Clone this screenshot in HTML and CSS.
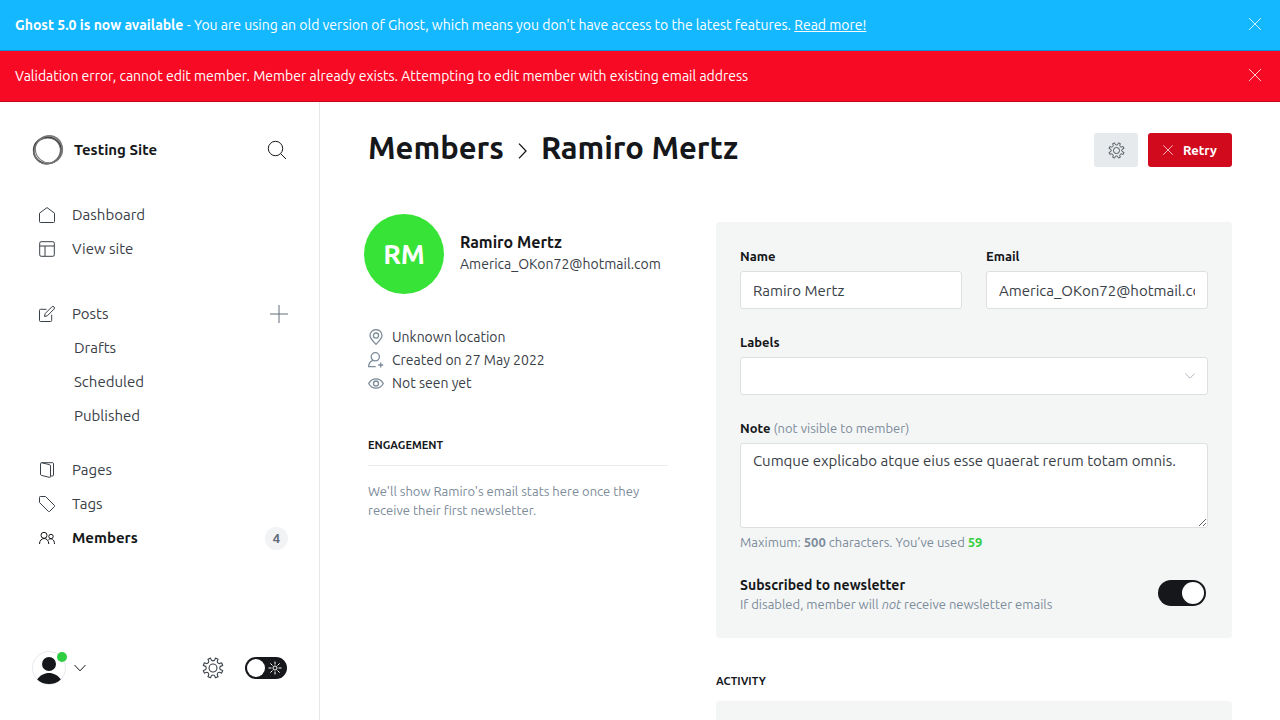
FILE: index.html
```html
<!DOCTYPE html>
<html lang="en">
<head>
<meta charset="utf-8">
<meta name="viewport" content="width=device-width, initial-scale=1">
<title>Ramiro Mertz - Members - Testing Site</title>
<link rel="stylesheet" href="styles.css">
</head>
<body>
<div class="app">
  <div class="alerts">
    <div class="alert alert-info" role="status">
      <p><strong>Ghost 5.0 is now available</strong> - You are using an old version of Ghost, which means you don't have access to the latest features. <a href="#">Read more!</a></p>
      <button class="alert-close" aria-label="Close"><svg viewBox="0 0 12 12" width="12" height="12"><path d="M0 0l12 12M12 0L0 12"/></svg></button>
    </div>
    <div class="alert alert-error" role="alert">
      <p>Validation error, cannot edit member. Member already exists. Attempting to edit member with existing email address</p>
      <button class="alert-close" aria-label="Close"><svg viewBox="0 0 12 12" width="12" height="12"><path d="M0 0l12 12M12 0L0 12"/></svg></button>
    </div>
  </div>

  <div class="shell">
    <aside class="sidebar">
      <header class="site">
        <svg class="site-logo" viewBox="0 0 32 32" width="32" height="32">
          <path d="M10 3.500C17-1 28 2 30 9.500c2 7-1 14-5 17.500 3-5 4.500-11 2-16C24 5 17 2.500 10 3.500z" fill="#bbb" stroke="none"/>
          <ellipse cx="15.400" cy="16.400" rx="13.800" ry="13.200" stroke="#333" stroke-width="1.500"/>
          <ellipse cx="15" cy="16.800" rx="13.600" ry="12.600" transform="rotate(-30 15 16.800)" stroke="#666" stroke-width="1"/>
          <ellipse cx="17" cy="15.400" rx="13.800" ry="13.400" transform="rotate(40 17 15.400)" stroke="#777" stroke-width="1"/>
          <ellipse cx="16.200" cy="16" rx="14.800" ry="13" transform="rotate(-55 16.200 16)" stroke="#777" stroke-width="1"/>
        </svg>
        <span class="site-name">Testing Site</span>
        <button class="icon-button" aria-label="Search"><svg viewBox="0 0 20 20" width="20" height="20"><circle cx="8.500" cy="8.500" r="7.200"/><path d="M13.700 13.700l5.300 5.300"/></svg></button>
      </header>

      <nav class="nav">
        <ul>
          <li><a href="#"><svg viewBox="0 0 16 16" width="16" height="16"><path d="M.5 6.200L8 .6l7.500 5.600v8.300a1 1 0 0 1-1 1h-13a1 1 0 0 1-1-1z"/></svg>Dashboard</a></li>
          <li><a href="#"><svg viewBox="0 0 16 16" width="16" height="16"><rect x=".7" y=".7" width="14.600" height="14.600" rx="1.500"/><path d="M.7 5h14.600M6 5v10.300"/></svg>View site</a></li>
        </ul>
        <ul class="posts">
          <li><a href="#"><svg viewBox="0 0 16 16" width="16" height="16"><path d="M7.500 3.300H1.500a1 1 0 0 0-1 1v10.200a1 1 0 0 0 1 1h10.200a1 1 0 0 0 1-1V8.700M5.500 10.500l.7-3L12.800.9a1.400 1.400 0 0 1 2.200 2.200L8.500 9.700z"/></svg>Posts</a>
            <button class="icon-button add" aria-label="New post"><svg viewBox="0 0 18 18" width="18" height="18"><path d="M9 0v18M0 9h18"/></svg></button></li>
          <li class="sub"><a href="#">Drafts</a></li>
          <li class="sub"><a href="#">Scheduled</a></li>
          <li class="sub"><a href="#">Published</a></li>
        </ul>
        <ul>
          <li><a href="#"><svg viewBox="0 0 16 16" width="16" height="16"><path d="M2.500.7h11a1 1 0 0 1 1 1V13a1 1 0 0 1-1 1h-1.700M2.500.7l7.800 1.900a1.500 1.500 0 0 1 1.200 1.400v10.300a1 1 0 0 1-1.300 1l-7.700-1.900a1.200 1.200 0 0 1-1-1.200V1.700a1 1 0 0 1 1-1z"/></svg>Pages</a></li>
          <li><a href="#"><svg viewBox="0 0 16 16" width="16" height="16"><path d="M1.300.5h5.200L15.500 9.500a.7.7 0 0 1 0 1l-5 5a.7.7 0 0 1-1 0L.5 6.500V1.300a.8.800 0 0 1 .8-.8z"/></svg>Tags</a></li>
          <li class="active"><a href="#" aria-current="page"><svg viewBox="0 0 16 16" width="16" height="16"><circle cx="5" cy="5.300" r="3"/><circle cx="12" cy="6.500" r="2.200"/><path d="M.5 14c0-7.300 9.300-7.300 9.300 0M9.500 9.600c2.600-1.800 6-.4 6 4.400"/></svg>Members</a><span class="count">4</span></li>
        </ul>
      </nav>

      <footer class="userbar">
        <button class="user" aria-label="User menu">
          <span class="user-photo">
            <svg viewBox="0 0 34 34" width="34" height="34"><circle cx="17" cy="17" r="16.500" fill="#fff" stroke="#e5e9ed"/><circle cx="17" cy="13" r="7" fill="#15171a" stroke="none"/><path d="M5.200 28.500c5.500-8.800 18.100-8.800 23.600 0-6.200 6-17.400 6-23.600 0z" fill="#15171a" stroke="none"/></svg>
            <span class="presence"></span>
          </span>
          <svg class="chevron" viewBox="0 0 12 8" width="12" height="8"><path d="M.5 1L6 6.800 11.500 1"/></svg>
        </button>
        <button class="icon-button settings" aria-label="Settings"><svg viewBox="0 0 24 24" width="22" height="22"><use href="#gear"/></svg></button>
        <label class="night">
          <input type="checkbox" aria-label="Night mode">
          <svg viewBox="0 0 14 14" width="14" height="14"><circle cx="7" cy="7" r="2"/><path d="M7 .5v3M7 10.500v3M.5 7h3M10.500 7h3M2.400 2.400l2.100 2.100M9.500 9.500l2.100 2.100M2.400 11.600l2.100-2.100M9.500 4.500l2.100-2.100"/></svg>
        </label>
      </footer>
    </aside>

    <main class="main">
      <header class="page-header">
        <h1><a href="#">Members</a><svg viewBox="0 0 9 16" width="9" height="16"><path d="M1 .6L8 8l-7 7.400" stroke-width="1.300"/></svg>Ramiro Mertz</h1>
        <div class="actions">
          <button class="btn btn-gray" aria-label="Member actions"><svg viewBox="0 0 24 24" width="17" height="17"><use href="#gear"/></svg></button>
          <button class="btn btn-red"><svg viewBox="0 0 10 10" width="10" height="10"><path d="M.3.3l9.400 9.400M9.700.3L.3 9.700" stroke-width=".7"/></svg>Retry</button>
        </div>
      </header>

      <div class="columns">
        <section class="profile">
          <div class="identity">
            <span class="initials">RM</span>
            <div class="identity-text">
              <h2>Ramiro Mertz</h2>
              <p>America_OKon72@hotmail.com</p>
            </div>
          </div>
          <ul class="facts">
            <li><svg viewBox="0 0 16 16" width="16" height="16"><path d="M8 15.400C6.300 13.300 2 10.200 2 6.600a6 6 0 0 1 12 0c0 3.600-4.300 6.700-6 8.800z"/><circle cx="8" cy="6.600" r="2.600"/></svg>Unknown location</li>
            <li><svg viewBox="0 0 16 16" width="16" height="16"><circle cx="7.300" cy="4.800" r="4.100"/><path d="M5 8.300C2 9.300.7 11.500.7 14.600h7M12.700 10.500v5M10.200 13h5"/></svg>Created on 27 May 2022</li>
            <li><svg viewBox="0 0 16 16" width="16" height="16"><path d="M.7 8.500C4 2.300 12 2.300 15.300 8.500 12 14.700 4 14.700.7 8.500z"/><circle cx="8" cy="8.500" r="2.500"/></svg>Not seen yet</li>
          </ul>
          <h3 class="section-title ruled">Engagement</h3>
          <p class="hint">We'll show Ramiro's email stats here once they receive their first newsletter.</p>
        </section>

        <section class="details">
          <form class="panel">
            <div class="field">
              <label for="name">Name</label>
              <input id="name" type="text" value="Ramiro Mertz">
            </div>
            <div class="field">
              <label for="email">Email</label>
              <input id="email" type="email" value="America_OKon72@hotmail.com">
            </div>
            <div class="field wide">
              <label for="labels">Labels</label>
              <div class="select">
                <select id="labels"><option></option></select>
                <svg viewBox="0 0 10 6" width="10" height="6"><path d="M.4.6L5 5.200 9.600.6"/></svg>
              </div>
            </div>
            <div class="field wide">
              <label for="note">Note <span>(not visible to member)</span></label>
              <textarea id="note">Cumque explicabo atque eius esse quaerat rerum totam omnis.</textarea>
              <p class="muted">Maximum: <b>500</b> characters. You’ve used <b class="used">59</b></p>
            </div>
            <div class="subscribe wide">
              <div>
                <label for="subscribed">Subscribed to newsletter</label>
                <p class="muted">If disabled, member will <em>not</em> receive newsletter emails</p>
              </div>
              <input id="subscribed" class="switch" type="checkbox" checked>
            </div>
          </form>
          <h3 class="section-title">Activity</h3>
          <div class="activity"></div>
        </section>
      </div>
    </main>
  </div>
</div>

<svg class="symbols" aria-hidden="true">
  <symbol id="gear" viewBox="0 0 24 24"><path d="M9.800 2.600a2.300 2.300 0 0 0 4.400 0l.5-1.400 2.800 1.200-.6 1.400a2.300 2.300 0 0 0 3.100 3.100l1.400-.6 1.200 2.900-1.400.5a2.300 2.300 0 0 0 0 4.500l1.400.5-1.200 2.900-1.400-.6a2.300 2.300 0 0 0-3.100 3.100l.6 1.400-2.800 1.200-.5-1.400a2.300 2.300 0 0 0-4.400 0l-.5 1.400-2.800-1.200.6-1.400A2.300 2.300 0 0 0 4 17l-1.400.6-1.200-2.900 1.400-.5a2.300 2.300 0 0 0 0-4.500l-1.400-.5 1.200-2.900L4 6.900a2.300 2.300 0 0 0 3.100-3.100l-.6-1.400 2.800-1.200z" stroke-width="1.200" stroke-linejoin="round"/><circle cx="12" cy="12" r="4.300" stroke-width="1.200"/></symbol>
</svg>
</body>
</html>
```

FILE: styles.css
```css
* {
  box-sizing: border-box;
}

body,
h1, h2, h3, p, ul {
  margin: 0;
  padding: 0;
}

body {
  color: #15171a;
  background: #fff;
  font: 14px/20px Ubuntu, "Noto Sans", sans-serif;
}

ul {
  list-style: none;
}

a {
  color: inherit;
  text-decoration: none;
}

button,
input,
select,
textarea {
  font: inherit;
  color: inherit;
}

button {
  padding: 0;
  border: 0;
  background: none;
  cursor: pointer;
}

svg {
  display: block;
  flex: none;
  fill: none;
  stroke: currentColor;
}

.symbols {
  position: absolute;
  width: 0;
  height: 0;
}

.app {
  display: flex;
  flex-direction: column;
  height: 100vh;
}

/* Alerts */

.alert {
  display: flex;
  align-items: center;
  justify-content: space-between;
  padding: 15px 19px 15px 15px;
  color: #fff;
  border-bottom: 1px solid;
}

.alert-info {
  background: #14b8ff;
  border-color: #0e93cf;
}

.alert-error {
  background: #f70b24;
  border-color: #c5081c;
}

.alert a {
  text-decoration: underline;
}

.alert-close {
  padding-bottom: 2px;
  stroke-width: 0.8;
}

/* Sidebar */

.shell {
  display: flex;
  flex: 1;
  min-height: 0;
}

.sidebar {
  display: flex;
  flex: none;
  flex-direction: column;
  width: 320px;
  padding: 32px 32px 35px;
  border-right: 1px solid #e5e7e8;
}

.site {
  display: flex;
  align-items: center;
  gap: 10px;
}

.site-name {
  flex: 1;
  font-size: 15px;
  font-weight: 700;
}

.nav {
  flex: 1;
  margin-right: -1px;
  padding-top: 32px;
  color: #394047;
  font-size: 15px;
}

.nav .posts {
  margin: 31px 0 20px;
}

.nav li {
  display: flex;
  align-items: center;
  justify-content: space-between;
  height: 34px;
}

.nav a {
  display: flex;
  align-items: center;
  gap: 17px;
  padding-left: 7px;
}

.nav .sub a {
  padding-left: 42px;
}

.nav .active {
  color: #15171a;
  font-weight: 700;
}

.nav .add {
  color: #626d79;
}

.count {
  min-width: 23px;
  color: #626d79;
  background: #f1f3f5;
  border-radius: 12px;
  font-size: 13px;
  font-weight: 600;
  line-height: 23px;
  text-align: center;
}

.userbar {
  display: flex;
  align-items: center;
  gap: 21px;
}

.user {
  display: flex;
  align-items: center;
  gap: 8px;
  margin-right: auto;
}

.user-photo {
  position: relative;
}

.presence {
  position: absolute;
  top: 1px;
  right: -1px;
  width: 10px;
  height: 10px;
  border-radius: 50%;
  background: #30cf43;
}

.settings {
  color: #394047;
}

.night {
  display: grid;
  align-items: center;
  width: 42px;
}

.night > * {
  grid-area: 1 / 1;
}

.night input {
  width: 42px;
  height: 22px;
  margin: 0;
  padding: 2px;
  border-radius: 11px;
  background: #15171a;
  appearance: none;
}

.night input::before {
  content: "";
  display: block;
  width: 18px;
  height: 18px;
  border-radius: 50%;
  background: #fff;
}

.night svg {
  z-index: 1;
  justify-self: end;
  margin-right: 5px;
  color: #fff;
}

/* Main */

.main {
  flex: 1;
  min-width: 0;
  padding: 26px 48px;
  overflow-y: auto;
  scrollbar-width: none;
}

.page-header {
  display: flex;
  align-items: center;
  justify-content: space-between;
}

h1 {
  display: flex;
  align-items: center;
  gap: 14px;
  padding-bottom: 4px;
  font-size: 31px;
  font-weight: 700;
  line-height: 40px;
}

h1 svg {
  margin-top: 6px;
}

.actions {
  display: flex;
  gap: 10px;
}

.btn {
  display: flex;
  align-items: center;
  justify-content: center;
  gap: 10px;
  height: 34px;
  padding: 0 15px;
  border-radius: 3px;
  font-size: 13px;
  font-weight: 700;
}

.btn-gray {
  width: 44px;
  padding: 0;
  color: #394047;
  background: #e6eaed;
}

.btn-red {
  color: #fff;
  background: #d20a1e;
}

.columns {
  display: grid;
  grid-template-columns: 300px 1fr;
  gap: 48px;
  padding-top: 42px;
}

.identity {
  display: flex;
  align-items: center;
  gap: 16px;
  margin-left: -4px;
}

.initials {
  flex: none;
  width: 80px;
  border-radius: 50%;
  color: #fff;
  background: #37e337;
  font-size: 27px;
  font-weight: 600;
  line-height: 80px;
  text-align: center;
}

.identity-text {
  padding-bottom: 4px;
}

h2 {
  font-size: 16px;
  font-weight: 700;
  line-height: 24px;
}

.identity p,
.facts {
  color: #394047;
}

.facts {
  display: grid;
  gap: 3px;
  margin: 33px 0 42px;
}

.facts li {
  display: flex;
  align-items: center;
  gap: 8px;
}

.facts svg {
  color: #7c8b9a;
  stroke-width: 1.3;
}

.section-title {
  font-size: 11px;
  font-weight: 600;
  line-height: 20px;
  text-transform: uppercase;
}

.ruled {
  padding-bottom: 10px;
  border-bottom: 1px solid #e9ebec;
}

.hint {
  margin-top: 16px;
  color: #7c8b9a;
  font-size: 13px;
  line-height: 19px;
}

/* Member form */

.details {
  padding-top: 8px;
}

.panel {
  display: grid;
  grid-template-columns: 1fr 1fr;
  gap: 23px 24px;
  margin-bottom: 33px;
  padding: 24px;
  border-radius: 3px;
  background: #f4f6f6;
}

.wide {
  grid-column: 1 / -1;
}

.field {
  display: flex;
  flex-direction: column;
  min-width: 0;
}

.field label {
  margin-bottom: 5px;
  font-size: 13px;
  font-weight: 600;
}

.field label span {
  color: #7c8b9a;
  font-weight: 400;
}

.field input,
.field select,
.field textarea {
  width: 100%;
  height: 38px;
  margin: 0;
  padding: 0 12px;
  border: 1px solid #dddfe0;
  border-radius: 3px;
  color: #394047;
  background: #fff;
  font-size: 15px;
  appearance: none;
}

.field textarea {
  height: 85px;
  padding: 7px 12px;
  resize: vertical;
}

.select {
  display: grid;
  align-items: center;
}

.select > * {
  grid-area: 1 / 1;
}

.select svg {
  justify-self: end;
  margin-right: 13px;
  color: #aeb7c1;
  pointer-events: none;
}

.muted {
  color: #7c8b9a;
  font-size: 13px;
  line-height: 19px;
}

.field .muted {
  margin-top: 5px;
}

.used {
  color: #30cf43;
}

.subscribe {
  display: flex;
  align-items: center;
  justify-content: space-between;
  padding-right: 2px;
}

.subscribe label {
  font-weight: 600;
}

.switch {
  width: 48px;
  height: 26px;
  margin: 0 0 4px;
  padding: 2px;
  border-radius: 13px;
  background: #15171a;
  appearance: none;
}

.switch::before {
  content: "";
  display: block;
  width: 22px;
  height: 22px;
  border-radius: 50%;
  background: #fff;
}

.switch:checked::before {
  margin-left: auto;
}

.activity {
  height: 160px;
  margin-top: 10px;
  border-radius: 3px;
  background: #f4f6f6;
}
```
